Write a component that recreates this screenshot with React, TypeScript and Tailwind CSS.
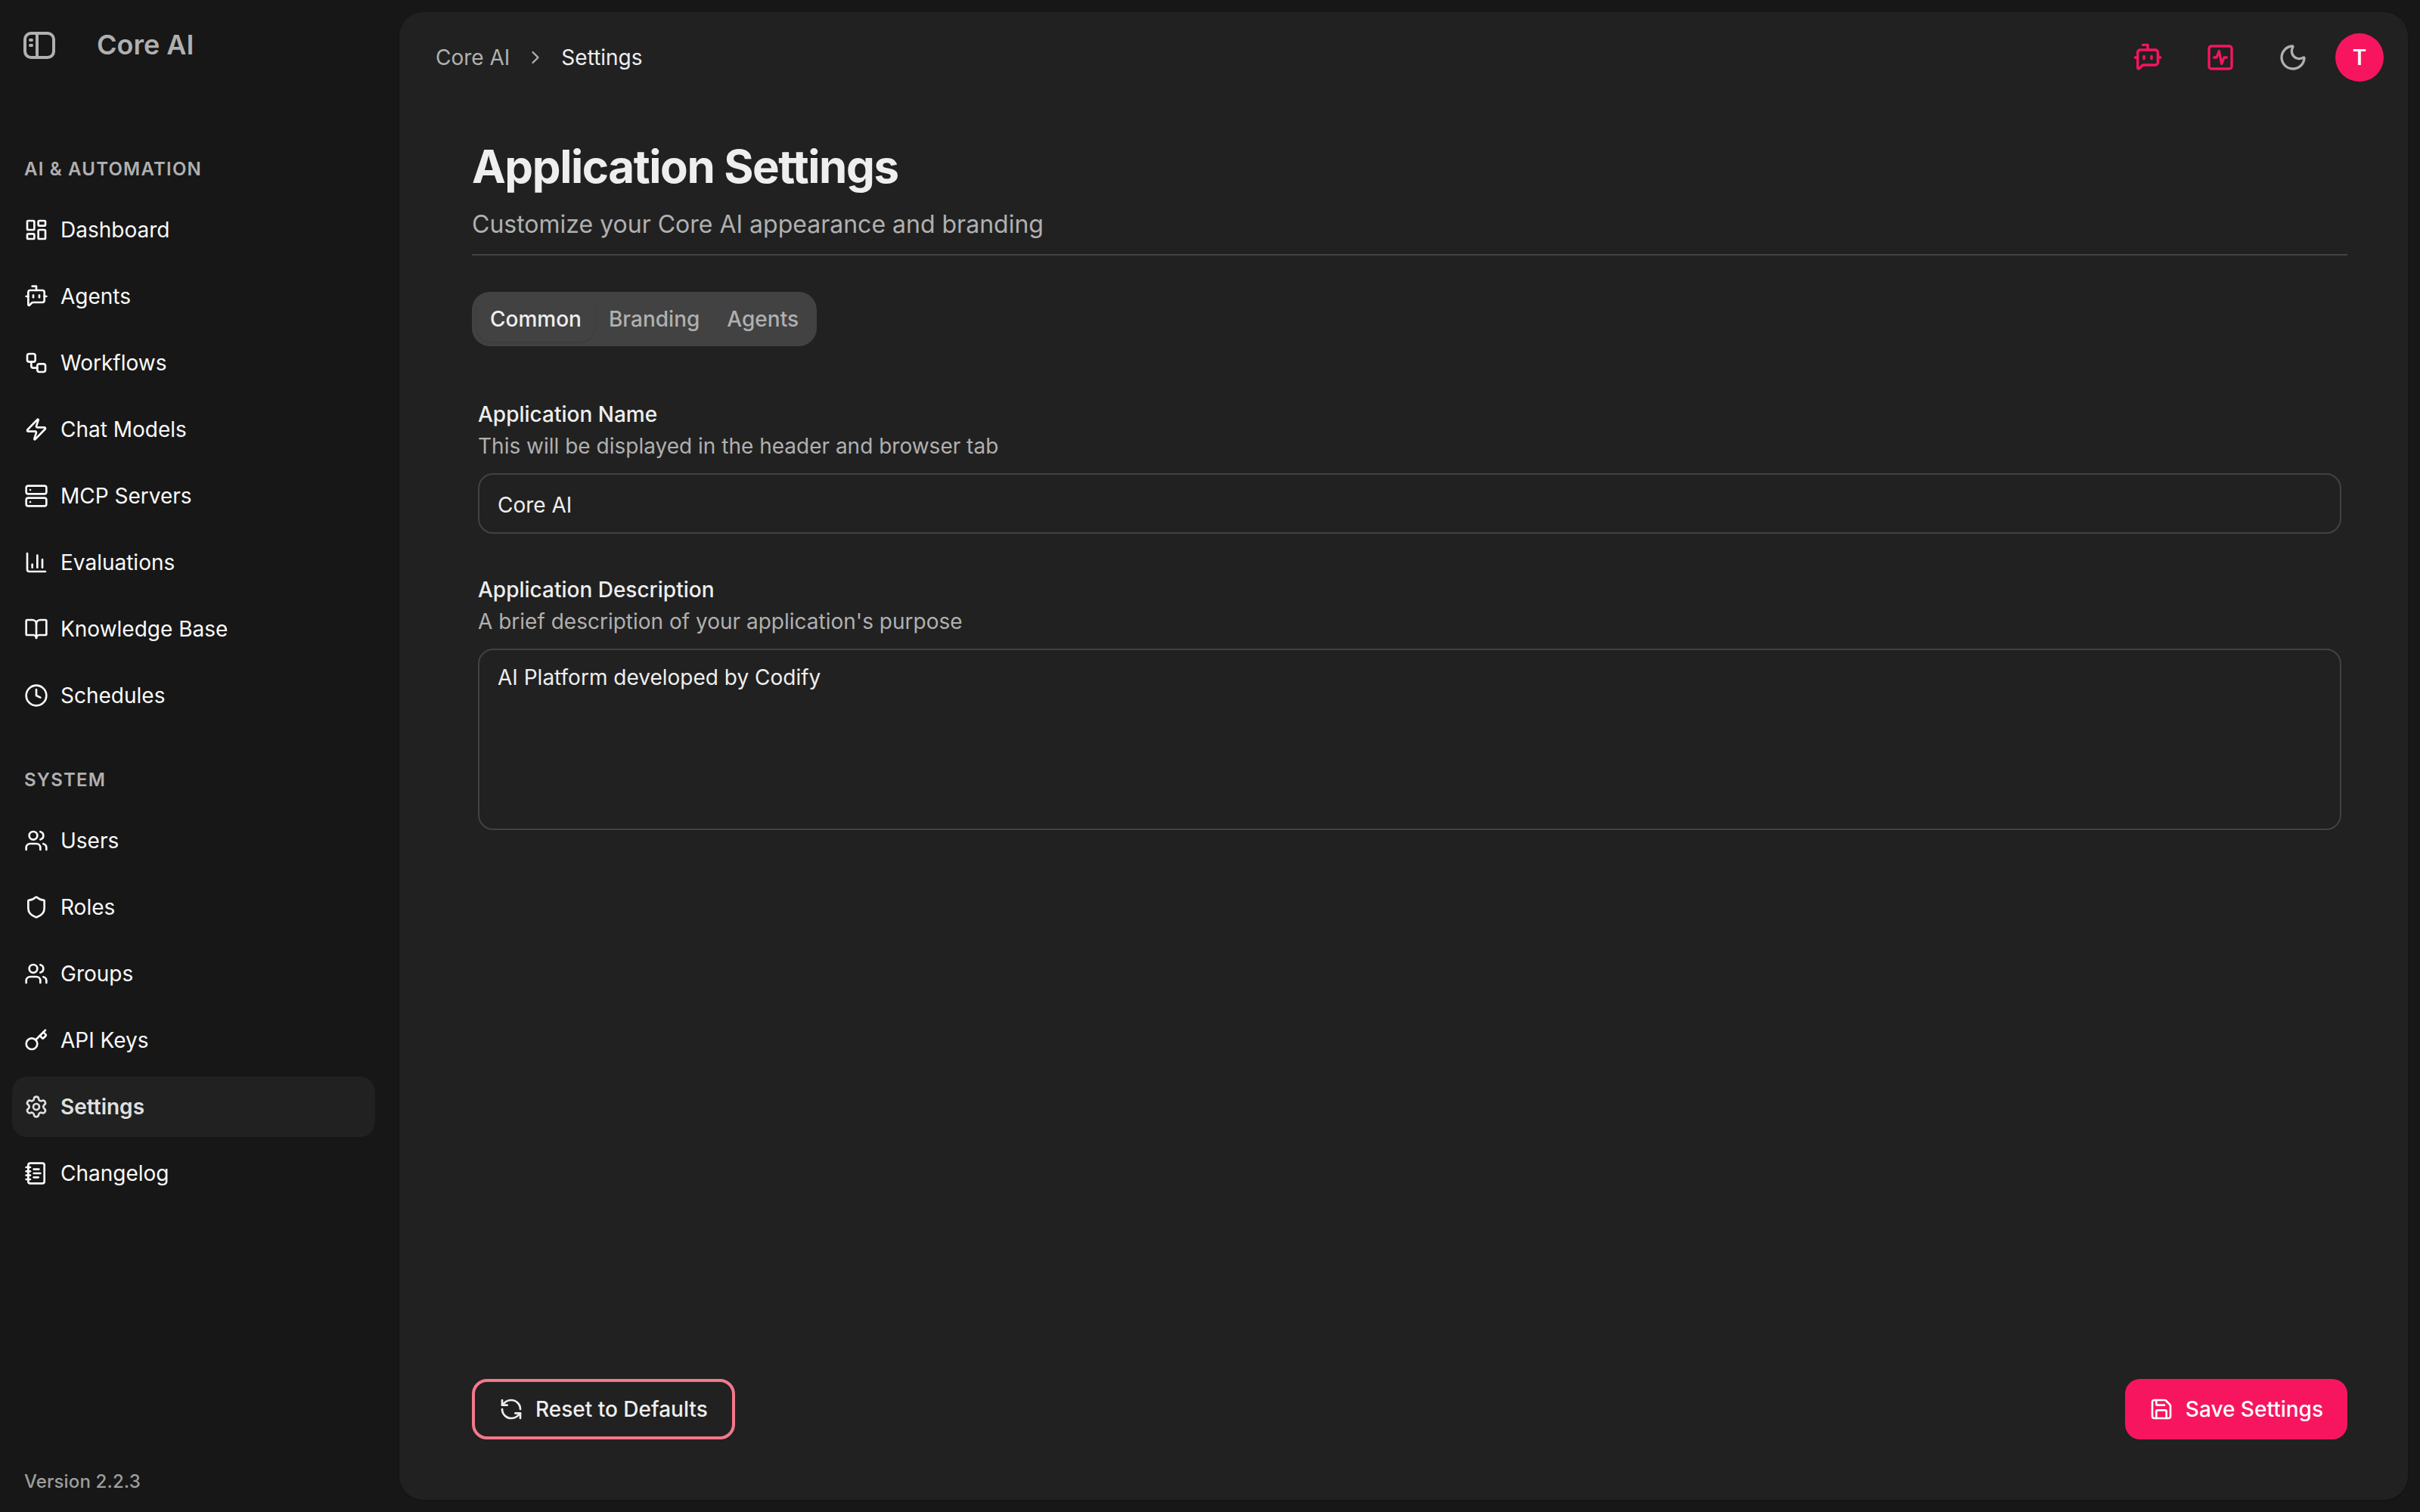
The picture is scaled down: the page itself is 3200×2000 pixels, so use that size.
import { useState } from 'react';
import clsx from 'clsx';
import {
  BookOpen,
  BotMessageSquare,
  ChartColumn,
  ChevronRight,
  Clock,
  Key,
  LayoutDashboard,
  Moon,
  NotebookText,
  RefreshCcw,
  Save,
  Server,
  Settings,
  Shield,
  SquareActivity,
  Users,
  Workflow,
  Zap,
  type LucideIcon,
} from 'lucide-react';

interface NavItem {
  label: string;
  icon: LucideIcon;
}

interface NavSection {
  title: string;
  items: NavItem[];
}

function SidebarToggleIcon() {
  return (
    <svg viewBox="0 0 42 36" fill="none" stroke="currentColor" strokeWidth="4" className="h-9 w-[42px]">
      <rect x="2" y="2" width="38" height="32" rx="8" />
      <path d="M18 2v32" />
      <path d="M9 11h2M9 18h2" strokeLinecap="round" />
    </svg>
  );
}

const navSections: NavSection[] = [
  {
    title: 'AI & Automation',
    items: [
      { label: 'Dashboard', icon: LayoutDashboard },
      { label: 'Agents', icon: BotMessageSquare },
      { label: 'Workflows', icon: Workflow },
      { label: 'Chat Models', icon: Zap },
      { label: 'MCP Servers', icon: Server },
      { label: 'Evaluations', icon: ChartColumn },
      { label: 'Knowledge Base', icon: BookOpen },
      { label: 'Schedules', icon: Clock },
    ],
  },
  {
    title: 'System',
    items: [
      { label: 'Users', icon: Users },
      { label: 'Roles', icon: Shield },
      { label: 'Groups', icon: Users },
      { label: 'API Keys', icon: Key },
      { label: 'Settings', icon: Settings },
      { label: 'Changelog', icon: NotebookText },
    ],
  },
];

const tabs = ['Common', 'Branding', 'Agents'];

function Sidebar() {
  return (
    <aside className="flex h-full w-[528px] shrink-0 flex-col">
      <div className="flex h-[120px] items-center gap-[55px] pl-[31px] text-[#b0b0b0]">
        <SidebarToggleIcon />
        <span className="-mt-[2px] text-[36px] leading-[48px] font-semibold">Core AI</span>
      </div>

      <nav className="flex flex-1 flex-col gap-10 px-4 pt-[72px]">
        {navSections.map((section) => (
          <div key={section.title} className="pr-4">
            <h2 className="flex h-16 items-center px-4 text-[24px] font-semibold tracking-[0.05em] text-[#b0b0b0] uppercase">
              {section.title}
            </h2>
            <ul className="mt-2 flex flex-col gap-2">
              {section.items.map(({ label, icon: Icon }) => {
                const active = label === 'Settings';
                return (
                  <li key={label}>
                    <a
                      className={clsx(
                        'flex h-20 items-center gap-4 rounded-[20px] px-4 text-[28px]',
                        active ? 'bg-[#212121] font-semibold text-[#e0e0e0]' : 'text-[#fafafa]'
                      )}
                    >
                      <Icon className="size-8" />
                      <span>{label}</span>
                    </a>
                  </li>
                );
              })}
            </ul>
          </div>
        ))}
      </nav>

      <p className="px-8 pb-5 text-[24px] leading-[40px] font-medium tracking-[0.006em] text-[#9e9e9e]">
        Version 2.2.3
      </p>
    </aside>
  );
}

function Header() {
  return (
    <header className="flex h-[120px] shrink-0 items-center justify-between pr-8 pl-12">
      <div className="flex items-center text-[28px]">
        <span className="text-[#b0b0b0]">Core AI</span>
        <ChevronRight className="mx-5 size-7 text-[#b0b0b0]" />
        <span className="text-[#eeeeee]">Settings</span>
      </div>
      <div className="flex items-center">
        <button className="flex w-24 justify-center">
          <BotMessageSquare className="size-10 text-[#f71560]" />
        </button>
        <button className="flex w-24 justify-center">
          <SquareActivity className="size-10 text-[#f71560]" />
        </button>
        <button className="flex w-24 justify-center">
          <Moon className="size-10 text-[#b0b0b0]" />
        </button>
        <div className="ml-2 flex size-16 items-center justify-center rounded-full bg-[#f71560] text-[28px] font-semibold text-white">
          T
        </div>
      </div>
    </header>
  );
}

export default function App() {
  const [tab, setTab] = useState('Common');

  return (
    <div className="flex h-[2000px] w-[3200px] overflow-hidden bg-[#171717] font-['Inter',sans-serif]">
      <Sidebar />

      <main className="my-4 mr-4 flex flex-1 flex-col rounded-[32px] bg-[#212121] shadow-sm">
        <Header />

        <div className="flex flex-1 flex-col pt-12 pr-20 pb-20 pl-24">
          <div className="border-b-2 border-[#424242] pb-[15px]">
            <h1 className="text-[60px] leading-[72px] font-bold tracking-[-0.0238em] text-[#eeeeee]">
              Application Settings
            </h1>
            <p className="mt-[17px] text-[32px] leading-[48px] text-[#b0b0b0]">
              Customize your Core AI appearance and branding
            </p>
          </div>

          <div className="mt-12 flex h-[72px] w-fit items-center rounded-[24px] bg-[#424242] p-[6px]">
            {tabs.map((name) => (
              <button
                key={name}
                onClick={() => setTab(name)}
                className={clsx(
                  'h-[60px] rounded-[20px] px-[18px] text-[28px] font-medium',
                  tab === name ? 'text-[#eeeeee] shadow-sm' : 'text-[#b0b0b0]'
                )}
              >
                {name}
              </button>
            ))}
          </div>

          <form className="mt-[76px] flex flex-col gap-[60px] px-2">
            <div className="flex flex-col">
              <label className="text-[28px] leading-[28px] font-medium text-[#eeeeee]">Application Name</label>
              <p className="mt-2 text-[28px] leading-[40px] text-[#b0b0b0]">
                This will be displayed in the header and browser tab
              </p>
              <input
                defaultValue="Core AI"
                className="mt-4 h-20 rounded-[20px] border-2 border-[#424242] px-6 pt-[3px] text-[28px] text-[#eeeeee]"
              />
            </div>
            <div className="flex flex-col">
              <label className="text-[28px] leading-[28px] font-medium text-[#eeeeee]">Application Description</label>
              <p className="mt-2 text-[28px] leading-[40px] text-[#b0b0b0]">
                A brief description of your application's purpose
              </p>
              <textarea
                defaultValue="AI Platform developed by Codify"
                className="mt-4 h-60 resize-none rounded-[20px] border-2 border-[#424242] px-6 py-4 text-[28px] leading-[40px] text-[#eeeeee] shadow-xs"
              />
            </div>
          </form>

          <div className="mt-auto flex justify-between">
            <button className="flex h-20 items-center gap-4 rounded-[20px] border-4 border-[#f4788c] px-8 text-[28px] font-medium text-[#eeeeee]">
              <RefreshCcw className="size-8" />
              Reset to Defaults
            </button>
            <button className="flex h-20 items-center gap-4 rounded-[20px] bg-[#f71560] px-8 text-[28px] font-medium text-white">
              <Save className="size-8" />
              Save Settings
            </button>
          </div>
        </div>
      </main>
    </div>
  );
}
